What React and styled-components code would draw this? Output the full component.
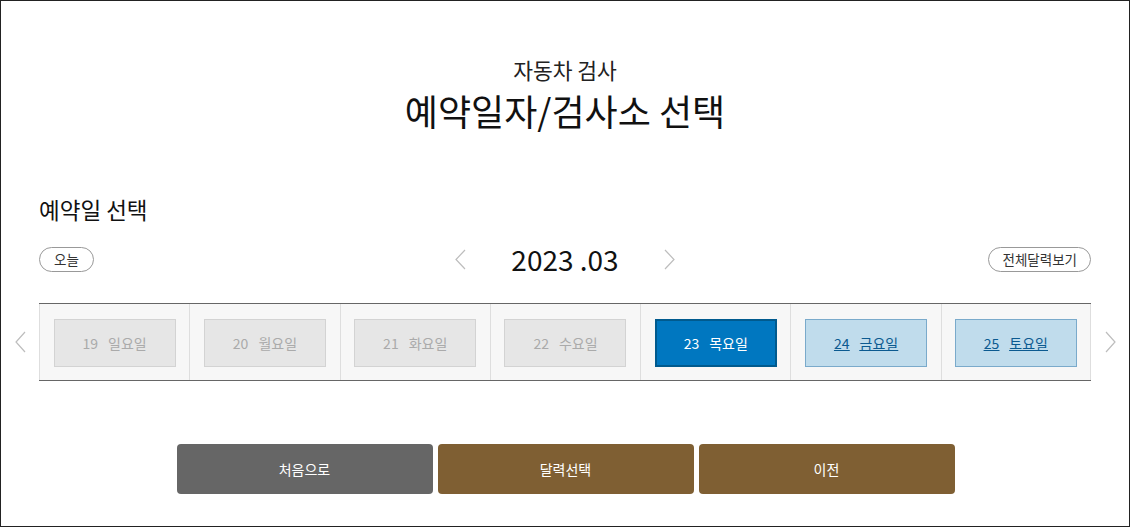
import styled, { createGlobalStyle } from "styled-components";

const GlobalStyle = createGlobalStyle`
  html, body {
    margin: 0;
    padding: 0;
    background: #ffffff;
  }
  body {
    font-family: "Noto Sans CJK KR", "Noto Sans", sans-serif;
    color: #111;
  }
  * { box-sizing: border-box; }
`;

const Frame = styled.div`
  width: 1130px;
  height: 527px;
  border: 1px solid #222;
  background: #fff;
  display: flex;
  flex-direction: column;
`;

const Header = styled.header`
  padding-top: 54px;
  text-align: center;
`;

const SubTitle = styled.div`
  font-size: 21.5px;
  line-height: 30px;
  color: #222;
`;

const Title = styled.h1`
  margin: 1px 0 0;
  font-size: 36px;
  line-height: 48px;
  font-weight: 400;
  color: #111;
`;

const Section = styled.section`
  padding: 0 38px;
  margin-top: 60px;
`;

const SectionTitle = styled.h2`
  margin: 0;
  font-size: 22.5px;
  line-height: 30px;
  font-weight: 400;
  color: #111;
`;

const Controls = styled.div`
  margin-top: 19px;
  display: grid;
  grid-template-columns: 1fr auto 1fr;
  align-items: center;
  height: 28px;
`;

const Pill = styled.button`
  justify-self: ${(p) => (p.$right ? "end" : "start")};
  height: 25px;
  padding: 0 ${(p) => (p.$right ? "13px" : "14px")};
  border: 1px solid #999;
  border-radius: 13px;
  background: #fff;
  font-family: inherit;
  font-size: 13.5px;
  color: #333;
  line-height: 23px;
`;

const MonthNav = styled.div`
  display: flex;
  align-items: center;
  gap: 45px;
`;

const Month = styled.div`
  font-size: 28px;
  line-height: 32px;
  color: #111;
`;

const Chevron = ({ dir = "left", size = 12, height = 22 }) => (
  <svg width={size} height={height} viewBox={`0 0 ${size} ${height}`} fill="none">
    <path
      d={
        dir === "left"
          ? `M${size - 1} 1 L1 ${height / 2} L${size - 1} ${height - 1}`
          : `M1 1 L${size - 1} ${height / 2} L1 ${height - 1}`
      }
      stroke="#bdbdbd"
      strokeWidth="1.2"
    />
  </svg>
);

const DayRow = styled.div`
  margin-top: 32px;
  display: flex;
  align-items: center;
`;

const SideArrow = styled.div`
  width: 38px;
  display: flex;
  justify-content: center;
`;

const Strip = styled.div`
  flex: 1;
  display: grid;
  grid-template-columns: repeat(7, 1fr);
  border-top: 1px solid #666;
  border-bottom: 1px solid #666;
  background: #f7f7f7;
`;

const Cell = styled.div`
  border-left: 1px solid #dedede;
  border-right: ${(p) => (p.$last ? "1px solid #dedede" : "none")};
  height: 76px;
  display: flex;
  justify-content: center;
  padding-top: 15px;
`;

const dayStyles = {
  off: `background:#e6e6e6;border:1px solid #d3d3d3;color:#aaa;`,
  on: `background:#0077c0;border:2px solid #005a8e;color:#fff;`,
  open: `background:#c0dcec;border:1px solid #7aaacb;color:#0b5a90;text-decoration:underline;`,
};

const DayButton = styled.button`
  width: 122px;
  height: 48px;
  font-family: inherit;
  font-size: 14px;
  display: flex;
  align-items: center;
  justify-content: center;
  gap: 10px;
  padding: 0;
  ${(p) => dayStyles[p.$state]}
  span { text-decoration: inherit; }
`;

const Footer = styled.div`
  margin-top: 63px;
  display: flex;
  justify-content: center;
  gap: 5px;
  padding-left: 1px;
`;

const ActionButton = styled.button`
  width: 256px;
  height: 50px;
  border: none;
  border-radius: 4px;
  background: ${(p) => p.$bg};
  color: #fff;
  font-family: inherit;
  font-size: 14px;
`;

const days = [
  { d: 19, w: "일요일", s: "off" },
  { d: 20, w: "월요일", s: "off" },
  { d: 21, w: "화요일", s: "off" },
  { d: 22, w: "수요일", s: "off" },
  { d: 23, w: "목요일", s: "on" },
  { d: 24, w: "금요일", s: "open" },
  { d: 25, w: "토요일", s: "open" },
];

export default function App() {
  return (
    <>
      <GlobalStyle />
      <Frame>
        <Header>
          <SubTitle>자동차 검사</SubTitle>
          <Title>예약일자/검사소 선택</Title>
        </Header>
        <Section>
          <SectionTitle>예약일 선택</SectionTitle>
          <Controls>
            <Pill>오늘</Pill>
            <MonthNav>
              <Chevron dir="left" size={11} height={21} />
              <Month>2023 .03</Month>
              <Chevron dir="right" size={11} height={21} />
            </MonthNav>
            <Pill $right>전체달력보기</Pill>
          </Controls>
        </Section>
        <DayRow>
          <SideArrow>
            <Chevron dir="left" size={11} height={22} />
          </SideArrow>
          <Strip>
            {days.map((x, i) => (
              <Cell key={x.d} $last={i === days.length - 1}>
                <DayButton $state={x.s}>
                  <span>{x.d}</span>
                  <span>{x.w}</span>
                </DayButton>
              </Cell>
            ))}
          </Strip>
          <SideArrow>
            <Chevron dir="right" size={11} height={22} />
          </SideArrow>
        </DayRow>
        <Footer>
          <ActionButton $bg="#666666">처음으로</ActionButton>
          <ActionButton $bg="#7f5f33">달력선택</ActionButton>
          <ActionButton $bg="#7f5f33">이전</ActionButton>
        </Footer>
      </Frame>
    </>
  );
}
